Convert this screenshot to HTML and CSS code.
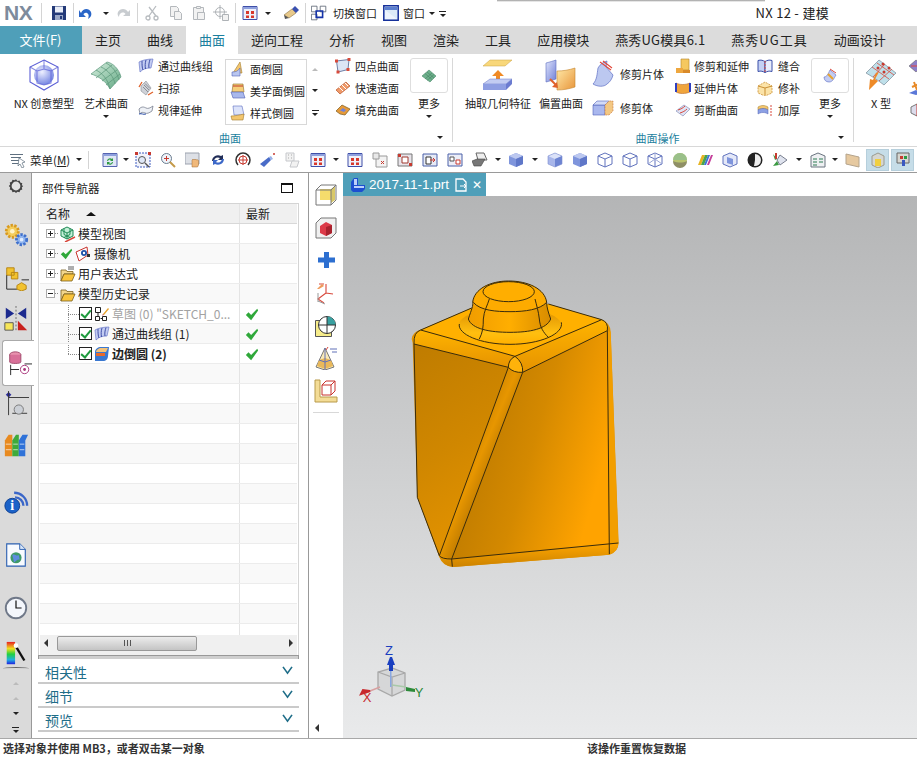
FILE: index.html
```html
<!DOCTYPE html>
<html lang="zh">
<head>
<meta charset="utf-8">
<title>NX 12 - 建模</title>
<link rel="stylesheet" href="styles.css">
</head>
<body>
<svg class="defs" width="0" height="0">
<defs>
<linearGradient id="gBlue" x1="0" y1="0" x2="1" y2="1"><stop offset="0" stop-color="#dfe4fb"/><stop offset="1" stop-color="#6f7fd8"/></linearGradient>
<linearGradient id="gOrange" x1="0" y1="0" x2="1" y2="1"><stop offset="0" stop-color="#ffe9a8"/><stop offset="1" stop-color="#e8953a"/></linearGradient>
<linearGradient id="gGreen" x1="0" y1="0" x2="1" y2="1"><stop offset="0" stop-color="#d8efe0"/><stop offset="1" stop-color="#62a883"/></linearGradient>
<radialGradient id="gSphere" cx=".4" cy=".35" r=".7"><stop offset="0" stop-color="#eef0ff"/><stop offset="1" stop-color="#6c7ee0"/></radialGradient>
<symbol id="save" viewBox="0 0 16 16"><path d="M1 1h14v14H1z" fill="#243a78"/><path d="M4 1.500h8v6H4z" fill="#e8ecf6"/><path d="M4 10h8v5H4z" fill="#9aa7c6"/><path d="M9 11h2v3H9z" fill="#243a78"/></symbol>
<symbol id="undo" viewBox="0 0 16 16"><path d="M3 8C5 3 11 3 13 7c1 3 0 5-3 7 1-3 1-5-1-6-2-.6-3 .4-3.500 1.500L8 12H1V5z" fill="#2a66c8"/></symbol>
<symbol id="redo" viewBox="0 0 16 16"><path d="M13 7C11 3 5 3 3 7c-1 2 0 4 1 5 0-2 1-4 3-4.500 2-.3 3 .3 3.500 1.500L8 11h7V5z" fill="#c8ccd0"/></symbol>
<symbol id="cut" viewBox="0 0 16 16"><g fill="none" stroke="#b8bcc0" stroke-width="1.300"><path d="M12 1 5 11M5 2l7 9"/><circle cx="4" cy="13" r="2"/><circle cx="12" cy="13" r="2"/></g></symbol>
<symbol id="copy" viewBox="0 0 16 16"><g fill="#f2f2f2" stroke="#b4b8bc"><path d="M2.500 1.500h6l2 2v8h-8z"/><path d="M6.500 6.500h5l2 2v6h-7z"/></g></symbol>
<symbol id="paste" viewBox="0 0 16 16"><g fill="#f2f2f2" stroke="#b4b8bc"><path d="M2.500 2.500h10v12h-10z"/><path d="M5.500 1.500h4v2h-4z"/><path d="M6.500 7.500h7v7h-7z"/></g></symbol>
<symbol id="move" viewBox="0 0 16 16"><g fill="none" stroke="#aeb2b6"><circle cx="7" cy="7" r="4.500"/><path d="M7 0v14M0 7h14"/><path d="M9.500 9.500h6v6h-6z" fill="#f2f2f2"/></g></symbol>
<symbol id="disp" viewBox="0 0 16 16"><path d="M1 1.500h14v13H1z" fill="#eef0fa" stroke="#3f4fa8"/><path d="M1.500 2h13v2h-13z" fill="#8ea0de"/><g fill="#d8382c"><path d="M4 6h3v3H4zM9 6h3v3H9zM4 10.500h3v2.500H4zM9 10.500h3v2.500H9z"/></g></symbol>
<symbol id="eraser" viewBox="0 0 16 16"><path d="M1 10 9 4l4 4-7 5z" fill="#e8c98a" stroke="#8d7444" stroke-width=".6"/><path d="M9 4l3-3 4 4-3 3z" fill="#3a50b0"/><path d="M1 10l5 3-4 1z" fill="#555"/></symbol>
<symbol id="switch" viewBox="0 0 20 20"><g fill="#fff" stroke="#55606e"><path d="M.5 1.500h7v7h-7zM11.500 1.500h7v7h-7zM.5 11.500h7v7h-7z"/></g><path d="M6.500 7.500h8v8h-8z" fill="none" stroke="#1533a8" stroke-width="2"/></symbol>
<symbol id="win" viewBox="0 0 16 16"><path d="M.8.800h14.400v14.400H.8z" fill="#dcebf8" stroke="#15309a" stroke-width="1.500"/><path d="M2 2h12v3H2z" fill="#5b7fcf"/><path d="M2 5l12 9H2z" fill="#f4f8ff" opacity=".7"/></symbol>
<symbol id="nx" viewBox="0 0 32 32"><circle cx="16" cy="16" r="10" fill="url(#gSphere)"/><g fill="none" stroke="#5b5fd6" stroke-width="1.100"><path d="M16 1 30 8v15l-14 8L2 23V8z"/><path d="M16 1v9M2 8l7 4M30 8l-7 4M9 12l7-2 7 2v12l-7 2-7-2z" opacity=".7"/></g></symbol>
<symbol id="art" viewBox="0 0 32 32"><path d="M1 15 17 3c6 1 12 7 14 15L20 30C16 22 8 17 1 15z" fill="url(#gGreen)" stroke="#5f9a7e" stroke-width=".7"/><g fill="none" stroke="#5f9a7e" stroke-width=".8"><path d="M6 19 22 6M12 22 27 11M16 26 30 15M6 11c6 3 12 9 14 19M11 8c7 3 13 10 14 17M16 4c6 3 11 9 13 17"/></g></symbol>
<symbol id="thru" viewBox="0 0 16 16"><path d="M1 4c3-2 9-3 14-3l-2 9c-5 0-8 1-11 4z" fill="#c3ccf2" stroke="#5d6bc2" stroke-width=".6"/><path d="M4 3c0 3 0 7 1 9M8 2c-1 3-1 6-.5 9M12 1.500c-1 3-1.500 6-1 8.500" stroke="#3f4fa8" fill="none"/></symbol>
<symbol id="sweep" viewBox="0 0 16 16"><path d="M3 6 8 1l5 7-5 7-5-4z" fill="#cfd2d8" stroke="#8c8f96" stroke-width=".6"/><path d="M5 7l5 5M6 5l5 5M7 3.500l5 5" stroke="#8c8f96"/><path d="M1 7 4 2M10 15l5-3" stroke="#e0612a" stroke-width="1.300"/></symbol>
<symbol id="law" viewBox="0 0 16 16"><path d="M1 7c3-3 5-2 7-1s4 0 7-2l-1 5c-3 2-5 3-7 2s-4-1-5 1z" fill="#eef1f6" stroke="#7a8090" stroke-width=".8"/><path d="M1 12c3-1 4 1 7 0" stroke="#2b4fa8" fill="none"/></symbol>
<symbol id="fblend" viewBox="0 0 16 16"><path d="M10 1l2 11H3z" fill="#f3c66f" stroke="#a37a2a" stroke-width=".6"/><path d="M2 11c4 0 6-1 8-4v8H2z" fill="#b9c6f0" stroke="#5466b8" stroke-width=".6"/></symbol>
<symbol id="ablend" viewBox="0 0 16 16"><path d="M3 1h10l1 8H2z" fill="#f6cf7a" stroke="#8d6b2a" stroke-width=".6"/><path d="M3 3h10" stroke="#c0392b"/><path d="M1 9h12l2 6H3z" fill="#a9b8ec" stroke="#5060b4" stroke-width=".6"/></symbol>
<symbol id="sblend" viewBox="0 0 16 16"><path d="M3 1h9l2 9H4z" fill="#dce3fa" stroke="#5a6cc0" stroke-width=".6"/><path d="M1 11c4 0 8-1 13-2l-1 6H2z" fill="#f3c66f" stroke="#a37a2a" stroke-width=".6"/></symbol>
<symbol id="fourpt" viewBox="0 0 16 16"><path d="M1.500 3 14 1.500l-1 10L3 14z" fill="#dce6f6" stroke="#6f7fa6"/><g fill="#d84a3a"><rect x="0" y="1.500" width="3" height="3"/><rect x="12.500" y="0" width="3" height="3"/><rect x="11.500" y="10" width="3" height="3"/><rect x="1.500" y="12.500" width="3" height="3"/></g></symbol>
<symbol id="quick" viewBox="0 0 16 16"><path d="M1 10 11 2l4 4L5 14z" fill="#ef9a6a" stroke="#b8552a" stroke-width=".7"/><path d="M4 7l4 4M7 5l4 4M10 3l3 3" stroke="#fff"/></symbol>
<symbol id="fill" viewBox="0 0 16 16"><path d="M1 9 7 3l8 4-5 6-5-1z" fill="#e69a3a" stroke="#7a5a1f" stroke-width=".7"/><path d="M5 8.500 8 6l3 2-2 2z" fill="#7283d6"/></symbol>
<symbol id="more1" viewBox="0 0 16 16"><path d="M1 8 8 2l7 6-6 6z" fill="#6eb08c" stroke="#4a8a69" stroke-width=".6"/><path d="M4 5.500l7 6M6 4l7 6M4 11l7-6M6 12.500l7-6" stroke="#3f7a5c" stroke-width=".5"/></symbol>
<symbol id="extract" viewBox="0 0 32 32"><path d="M1 7 8 1h22l-7 6z" fill="#f8d77a" stroke="#caa142" stroke-width=".5"/><path d="M14 11h4v5h4l-6 6-6-6h4z" transform="rotate(180 16 16.500)" fill="#f08a24"/><path d="M1 25l7-5h22l-6 5z" fill="#c2ccf2" stroke="#6a79c8" stroke-width=".5"/><path d="M1 25h23v6H1z" fill="#8e9ee2"/><path d="M24 25l6-5v5l-6 6z" fill="#6b7bd0"/></symbol>
<symbol id="offset" viewBox="0 0 32 32"><path d="M1 4c4-1 7-2 10-3v19c-3 1-6 2-10 3z" fill="url(#gBlue)" stroke="#5a6cc0" stroke-width=".6"/><path d="M12 12c6 0 12-1 18-3v19c-6 2-12 3-18 3z" fill="url(#gOrange)" stroke="#c5872f" stroke-width=".6"/><path d="M5 20l6 6" stroke="#e0612a" stroke-width="2"/><path d="M13 29l-6-1 5-5z" fill="#e0612a"/></symbol>
<symbol id="tsheet" viewBox="0 0 22 28"><path d="M1 24c4-4 4-10 5-16 2-4 6-6 9-7l-1 6 7 8c-1 4-3 7-6 9-3 3-9 3-14 0z" fill="#bcc8f0" stroke="#5d6fc4" stroke-width=".7"/><path d="M8 2l11 8M11 1l9 7" stroke="#e0463a" stroke-width="1.100" fill="none"/></symbol>
<symbol id="tbody" viewBox="0 0 22 16"><path d="M1 5h12v10H1z" fill="#a9b7ee" stroke="#5161bb" stroke-width=".6"/><path d="M1 5l4-4h12l-4 4z" fill="#d2daf8" stroke="#5161bb" stroke-width=".6"/><path d="M13 5l4-4h4v10l-4 4h-4z" fill="#f3c884" stroke="#c5713a" stroke-width=".6" stroke-dasharray="2 1"/></symbol>
<symbol id="ttrim" viewBox="0 0 16 16"><path d="M6 1h8v11H6z" fill="#f5c85f" stroke="#b1852a" stroke-width=".6"/><path d="M1 10h7v5H1z" fill="#eea73f"/><path d="M8 12h7v3H8z" fill="#d98a2a"/></symbol>
<symbol id="tsheet2" viewBox="0 0 16 16"><path d="M1 3c4 2 9 2 14 0v9c-5 2-10 2-14 0z" fill="#f0a53c" stroke="#b9692a" stroke-width=".6"/><path d="M1 3v9M15 3v9" stroke="#3040c0" stroke-width="2"/></symbol>
<symbol id="tcut" viewBox="0 0 16 16"><path d="M1 9 9 3l6 4-7 7z" fill="#dfe3f4" stroke="#7a83b0" stroke-width=".6"/><path d="M3 8c3-1 5-2 7-4M5 11c3-1 5-2 7-4" stroke="#d8483c" fill="none"/></symbol>
<symbol id="sew" viewBox="0 0 16 16"><path d="M1 2.500c3-1 5 0 7 1v11c-2-1-4-2-7-1z" fill="#c4d0f4" stroke="#3a4fa8"/><path d="M15 2.500c-3-1-5 0-7 1v11c2-1 4-2 7-1z" fill="#e8edfc" stroke="#3a4fa8"/><path d="M8 3v12" stroke="#d8483c" stroke-dasharray="2 1"/></symbol>
<symbol id="patch" viewBox="0 0 16 16"><path d="M1 6l7-4 7 4v7l-7 3-7-3z" fill="#fbe3a8" stroke="#c98f35" stroke-width=".8" stroke-dasharray="2 1"/><path d="M8 8v7M1 6l7 2 7-2" stroke="#c98f35" fill="none"/></symbol>
<symbol id="thick" viewBox="0 0 16 16"><path d="M1 5c3-2 7-2 10 0v3C8 6 4 6 1 8z" fill="#f3c66f" stroke="#a37a2a" stroke-width=".5"/><path d="M1 8c3-2 7-2 10 0v4C8 10 4 10 1 12z" fill="#8ca0e4" stroke="#4f61b4" stroke-width=".5"/><path d="M14 3v11" stroke="#d8483c" stroke-dasharray="2 1"/></symbol>
<symbol id="more2" viewBox="0 0 16 16"><path d="M2 9c3 0 4-3 6-7l6 5c-2 3-3 7-7 7-3 0-5-2-5-5z" fill="#c3ccf2" stroke="#5d6fc4" stroke-width=".6"/><path d="M6 6l5 5" stroke="#e8a42c" stroke-width="2"/><path d="M8 1l6 4" stroke="#d8483c"/></symbol>
<symbol id="xtype" viewBox="0 0 32 32"><path d="M1 14 14 1l17 13-12 12C14 22 8 18 1 14z" fill="#bfe0ea" stroke="#6a7a8a" stroke-width=".6"/><path d="M7 8 24 20M12 4l17 12M8 18 20 5M14 22 27 10" stroke="#d8483c" fill="none" stroke-width=".8"/><g fill="#c73a30"><circle cx="13" cy="9" r="1.500"/><circle cx="19" cy="13" r="1.500"/><circle cx="24" cy="9" r="1.500"/><circle cx="18" cy="5" r="1.500"/></g><path d="M14 14l-4 7 3 2-9 9 1-11 3 1 3-7z" transform="translate(0 -1)" fill="#ee8a28"/></symbol>
<symbol id="x1" viewBox="0 0 16 16"><path d="M1 8l7-6 7 5-7 7z" fill="#8c7fc8" stroke="#555" stroke-width=".5"/><path d="M3 8h9" stroke="#e0463a"/></symbol>
<symbol id="x2" viewBox="0 0 16 16"><path d="M1 13l7-3 7 3-7 2z" fill="#5b78d8"/><path d="M6 2l3 8M4 7l7-3" stroke="#e88a28" stroke-width="2"/></symbol>
<symbol id="x3" viewBox="0 0 16 16"><path d="M3 5l6-3 6 4-6 8-6-3z" fill="#dcdcec" stroke="#777"/><path d="M9 2v12" stroke="#c73a30"/></symbol>
<symbol id="menu" viewBox="0 0 16 16"><path d="M0 2h13v1H0zM1 5h10v1H1zM1 8h9v1H1zM2 11h7v1H2z" fill="#5f7080"/><path d="M9 6l6 4-3 1 2 4-2 1-2-4-2 2z" fill="#fff" stroke="#5f7080" stroke-width=".7"/></symbol>
<symbol id="refresh" viewBox="0 0 16 16"><path d="M1 1.500h14v13H1z" fill="#dfe6f6" stroke="#5563b0"/><path d="M1.500 2h13v2h-13z" fill="#8ea0de"/><path d="M5 9a3 3 0 0 1 5-2l1-1v3H8l1-1a2 2 0 0 0-3 1zM11 10a3 3 0 0 1-5 2l-1 1v-3h3l-1 1a2 2 0 0 0 3-1z" fill="#2f9a42"/></symbol>
<symbol id="fit" viewBox="0 0 16 16"><path d="M1 1h14v14H1z" fill="#f1f3fb" stroke="#3f5cc0" stroke-dasharray="2 1"/><circle cx="7" cy="8" r="3.500" fill="#dfe8f8" stroke="#555"/><path d="M10 11l4 4" stroke="#555" stroke-width="1.500"/><path d="M0 0h3v3H0zM13 0h3v3h-3z" fill="#c73a30"/></symbol>
<symbol id="zoom" viewBox="0 0 16 16"><circle cx="6.500" cy="6.500" r="5" fill="#eef3fa" stroke="#6a7c8e"/><path d="M6.500 4v5M4 6.500h5" stroke="#c73a30"/><path d="M10 10l5 5" stroke="#c49a4a" stroke-width="2"/></symbol>
<symbol id="pan" viewBox="0 0 16 16"><path d="M0 1h14v11H0z" fill="#dde0e6" stroke="#9ca2ae"/><path d="M7 15V8l1-1 1 1 1-1 1 1 1-.5 1.500 1V13l-1 2z" fill="#f0b87a" stroke="#a06a30" stroke-width=".5"/></symbol>
<symbol id="rotate" viewBox="0 0 16 16"><path d="M2 9a6 6 0 0 1 9-5l2-1v5H8l2-2a4 4 0 0 0-6 3z" fill="#222e58"/><path d="M14 7a6 6 0 0 1-9 5l-2 1V8h5l-2 2a4 4 0 0 0 6-3z" fill="#3c68c8"/></symbol>
<symbol id="orbit" viewBox="0 0 16 16"><path d="M3 13a7 7 0 1 1 10 0" fill="none" stroke="#333" stroke-width="1.500"/><circle cx="8" cy="8" r="4" fill="#fff" stroke="#c73a30"/><path d="M8 3v10M3 8h10" stroke="#c73a30"/></symbol>
<symbol id="spot" viewBox="0 0 16 16"><path d="M0 12l9-7 2 3-7 7z" fill="#4a6cc8"/><path d="M9 5l2 3 2-1-2-3z" fill="#9ab2e8"/><circle cx="14" cy="2" r="1" fill="#c73a30"/></symbol>
<symbol id="ghost" viewBox="0 0 16 16"><path d="M1 1h8v8H1z" fill="#f2f2f2" stroke="#c6c8cc"/><path d="M7 9h7l-2 6H5z" fill="#f2f2f2" stroke="#c6c8cc"/><path d="M3 3h1M6 3h1M3 6h1M6 6h1" stroke="#aaa"/></symbol>
<symbol id="grid" viewBox="0 0 16 16"><path d="M4 4h11v11H4z" fill="#f3f3f3" stroke="#9a9a9a"/><path d="M1 1h6v6H1z" fill="#e8e8e8" stroke="#9a9a9a"/><path d="M9 9l3 3M12 9l-3 3" stroke="#c73a30"/></symbol>
<symbol id="v1" viewBox="0 0 16 16"><path d="M1 2h14v12H1z" fill="#e8e4ea" stroke="#777"/><path d="M5 5h6v6H5z" fill="#fff" stroke="#a03a30"/><path d="M1 2h3v3H1zM12 11h3v3h-3z" fill="#c73a30"/></symbol>
<symbol id="v2" viewBox="0 0 16 16"><path d="M1 2h14v12H1z" fill="#e6eaf6" stroke="#4a60a8"/><path d="M4 5h5v7H4z" fill="#fff" stroke="#333"/><path d="M8 8h5M11 6l2 2-2 2" stroke="#c73a30" fill="none"/></symbol>
<symbol id="v3" viewBox="0 0 16 16"><path d="M1 2h14v12H1z" fill="#eceef8" stroke="#4a60a8"/><path d="M3 5h4v4H3z" fill="#fff" stroke="#555"/><path d="M9 8h4v4H9z" fill="#fff" stroke="#c73a30"/></symbol>
<symbol id="printer" viewBox="0 0 16 16"><path d="M4 1h8l3 7H6z" fill="#eee" stroke="#666"/><path d="M0 9l5-2h8l-4 7H2z" fill="#777" stroke="#444" stroke-width=".6"/></symbol>
<symbol id="cube" viewBox="0 0 16 16"><path d="M8 1l7 3v8l-7 3-7-3V4z" fill="#7f95dc"/><path d="M8 1l7 3-7 3-7-3z" fill="#bcc8f0"/><path d="M8 7l7-3v8l-7 3z" fill="#5f77c8"/></symbol>
<symbol id="cubeS" viewBox="0 0 16 16"><path d="M8 1l7 3v8l-7 3-7-3V4z" fill="#a8b6ea"/><path d="M8 1l7 3-7 3-7-3z" fill="#dbe2f8"/><path d="M8 7l7-3v8l-7 3z" fill="#6d84d2"/><path d="M8 1l7 3v8l-7 3-7-3V4z" fill="none" stroke="#7d8ed0" stroke-width=".6"/></symbol>
<symbol id="cubeW" viewBox="0 0 16 16"><g fill="none" stroke="#6173bd"><path d="M8 1l7 3v8l-7 3-7-3V4z"/><path d="M1 4l7 3 7-3M8 7v8"/></g></symbol>
<symbol id="cubeH" viewBox="0 0 16 16"><g fill="none" stroke="#6173bd"><path d="M8 1l7 3v8l-7 3-7-3V4z"/><path d="M1 4l7 3 7-3M8 7v8"/><path d="M8 1v6M1 12l7-5 7 5" stroke="#9aa6d6"/></g></symbol>
<symbol id="ball" viewBox="0 0 16 16"><circle cx="8" cy="8" r="7" fill="#b9c46e"/><path d="M1 8a7 7 0 0 1 14 0z" fill="#9ac08a"/><path d="M1 9a7 7 0 0 0 14 0c-4 2-9 2-14 0z" fill="#8f8f66"/></symbol>
<symbol id="rainbow" viewBox="0 0 16 16"><path d="M1 13 5 3h3L4 13z" fill="#e6b422"/><path d="M4 13 8 3h3L7 13z" fill="#4aa54a"/><path d="M7 13l4-10h2L9 13z" fill="#3c72d8"/><path d="M10 13l4-10h2l-4 10z" fill="#c53f9a"/></symbol>
<symbol id="cubeA" viewBox="0 0 16 16"><path d="M8 1l7 3v8l-7 3-7-3V4z" fill="#e4e8f8" stroke="#6173bd"/><path d="M5 5l6 2v6l-6-2z" fill="#7f95dc"/></symbol>
<symbol id="disc" viewBox="0 0 16 16"><circle cx="8" cy="8" r="7.500" fill="#222"/><path d="M8 8V2a6 6 0 0 1 6 6 6 6 0 0 1-7 6z" fill="#eee"/></symbol>
<symbol id="sel" viewBox="0 0 16 16"><path d="M8 3l7 5-7 5-3-5z" fill="#dfe3ee" stroke="#7a8090"/><path d="M1 2l4 5-2 1zM1 14l4-5 2 4z" fill="#3a9a42"/><path d="M4 1v6" stroke="#c73a30" stroke-width="2"/></symbol>
<symbol id="layers" viewBox="0 0 16 16"><path d="M8 1l7 3v11H1V4z" fill="#eef0f2" stroke="#6a7480"/><path d="M3 7h4M3 10h4M3 13h4M9 7h4M9 10h4" stroke="#2c7a52"/></symbol>
<symbol id="paper" viewBox="0 0 16 16"><path d="M1 2l13 3v10L1 12z" fill="#e6c9a0" stroke="#b5a48c"/></symbol>
<symbol id="tog1" viewBox="0 0 16 16"><path d="M2 4l6-3 6 3v9l-6 3-6-3z" fill="#d6d6d0" stroke="#9a9a90"/><path d="M5 7h6v7H5z" fill="#f0cf40"/></symbol>
<symbol id="tog2" viewBox="0 0 16 16"><path d="M2 1h12v10H2z" fill="#d6d6d0" stroke="#666"/><path d="M5 4h3v3H5z" fill="#c73a30"/><path d="M9 4h3v3H9z" fill="#2a9a42"/><path d="M7 8h3v6H7z" fill="#3a58c0"/></symbol>
<symbol id="gear" viewBox="0 0 16 16"><path d="M8 1.200 9.500 3l2-.5.800 2 2 .8-.5 2L15.200 8l-1.400 1.500.5 2-2 .8-.8 2-2-.5L8 15l-1.500-1.200-2 .5-.8-2-2-.8.5-2L.8 8l1.400-1.500-.5-2 2-.8.800-2 2 .5z" fill="#444"/><circle cx="8" cy="8" r="4.400" fill="#e2e2e2"/></symbol>
<symbol id="gears" viewBox="0 0 28 28"><circle cx="10" cy="10" r="6.500" fill="#f4cd5c" stroke="#d89a20" stroke-width="3" stroke-dasharray="2.500 1.500"/><circle cx="20" cy="19" r="5.500" fill="#8fb4ee" stroke="#3f70cc" stroke-width="3" stroke-dasharray="2.500 1.500"/><circle cx="10" cy="10" r="2.500" fill="#fff3c8"/><circle cx="20" cy="19" r="2" fill="#e0ecff"/></symbol>
<symbol id="asm" viewBox="0 0 28 28"><path d="M4 3h8v8H4zM9 8h7v7H9z" fill="#f2c22e" stroke="#b58412"/><path d="M4 11v15h11M20 16h8" fill="none" stroke="#222"/><path d="M15 22l5-3 5 3v4l-5 2-5-2z" fill="#f2c22e" stroke="#b58412"/></symbol>
<symbol id="mirror" viewBox="0 0 28 28"><path d="M3 2l9 6-9 6zM25 2l-9 6 9 6z" fill="#1c2a8e"/><path d="M14 0v28" stroke="#666" stroke-dasharray="2 2"/><path d="M2 18h9v8H2z" fill="#f7e658" stroke="#555"/><path d="M16 26V16l10 10z" fill="#c8201c"/></symbol>
<symbol id="nav" viewBox="0 0 28 28"><ellipse cx="10" cy="5" rx="6" ry="3" fill="#e892ae" stroke="#a04a6a"/><path d="M4 5v8c0 2 12 2 12 0V5" fill="#d87098" stroke="#a04a6a"/><path d="M5 16v11M5 21h9M20 15h8" fill="none" stroke="#222"/><circle cx="20" cy="21" r="4.500" fill="none" stroke="#a8347a"/><circle cx="20" cy="21" r="1.500" fill="#a8347a"/></symbol>
<symbol id="constr" viewBox="0 0 28 28"><path d="M6 1l3 3-3 3-3-3z" fill="#2a2a9a"/><path d="M6 0v26M6 7h22M10 24h16" stroke="#333" fill="none"/><circle cx="17" cy="20" r="5" fill="#ccd0d6" stroke="#777"/></symbol>
<symbol id="books" viewBox="0 0 28 28"><path d="M2 8l4-6h4v23H2z" fill="#e88a20"/><path d="M10 8l4-6h3v23h-7z" fill="#3eaa3a"/><path d="M17 8l4-6h6l-3 6v17h-7z" fill="#2f72d8"/><path d="M3 12h6M3 18h6M11 12h5M11 18h5M18 12h5M18 18h5" stroke="#fff" opacity=".7"/></symbol>
<symbol id="info" viewBox="0 0 28 28"><circle cx="10" cy="18" r="8" fill="#1b62c8" stroke="#0f3f90"/><text x="10" y="23" class="svg-i">i</text><path d="M12 4a14 14 0 0 1 14 14M13 9a9 9 0 0 1 9 9" fill="none" stroke="#3a66c8" stroke-width="2.500"/></symbol>
<symbol id="web" viewBox="0 0 28 28"><path d="M4 2h14l6 6v18H4z" fill="#f8fbff" stroke="#2a5fb0" stroke-width="1.200"/><path d="M18 2v6h6" fill="#d8e6f8" stroke="#2a5fb0"/><circle cx="14" cy="17" r="6" fill="#3e9a6a"/><path d="M10 14c3-2 4 2 7 0l1 5c-2-1-5 2-6 3z" fill="#5d8de0"/></symbol>
<symbol id="clock" viewBox="0 0 28 28"><circle cx="14" cy="14" r="11" fill="#f4f7fc" stroke="#6f7888" stroke-width="2"/><path d="M14 6v8h6" fill="none" stroke="#111" stroke-width="1.300"/></symbol>
<symbol id="color" viewBox="0 0 28 28"><defs><linearGradient id="gSpec" x1="0" y1="0" x2="0" y2="1"><stop offset="0" stop-color="#e82020"/><stop offset=".3" stop-color="#f0e020"/><stop offset=".55" stop-color="#20d040"/><stop offset=".8" stop-color="#20b0e0"/><stop offset="1" stop-color="#2020e0"/></linearGradient></defs><path d="M4 1h9v24H4z" fill="url(#gSpec)"/><path d="M14 6l9 15" stroke="#111" stroke-width="2.500"/><circle cx="14" cy="5" r="2.500" fill="#fff"/></symbol>
<symbol id="r1" viewBox="0 0 24 24"><path d="M2 7l5-5h15v15l-5 5H2z" fill="#fff" stroke="#777"/><path d="M6 6h11v11H6z" fill="#f5dc6c"/><path d="M17 6l4-3v14l-4 3z" fill="#d8c868"/><path d="M2 7h15v15M17 7l5-5" fill="none" stroke="#777"/></symbol>
<symbol id="r2" viewBox="0 0 24 24"><path d="M2 7l5-5h15v15l-5 5H2z" fill="#f0f0f0" stroke="#777"/><path d="M6 10l6-4 6 3v8l-6 3-6-3z" fill="#dc3a48"/><path d="M12 11v9l6-3V9z" fill="#a8222e"/></symbol>
<symbol id="r3" viewBox="0 0 24 24"><path d="M10 4h5v5.500h6v5h-6V20h-5v-5.500H4v-5h6z" fill="#2d6fd0"/></symbol>
<symbol id="r4" viewBox="0 0 24 24"><path d="M12 12V3M12 12l7 1M5 3h5M12 12l-8 6 6 4" fill="none" stroke="#d8483c" stroke-width="1.100"/><path d="M3 8l5-5 2 2-5 3z" fill="#ef9a5a"/><path d="M4 12v9" stroke="#999"/><path d="M4 20l7 3" stroke="#999"/></symbol>
<symbol id="r5" viewBox="0 0 24 24"><path d="M1.500 6.500h16v16h-16z" fill="#f6ec8a" stroke="#555"/><circle cx="13" cy="11" r="8.500" fill="#fff" stroke="#333"/><path d="M13 2.500a8.500 8.500 0 0 1 8.500 8.500H13z" fill="#38a0a0"/><path d="M13 2.500v17M4.500 11h17" stroke="#333"/></symbol>
<symbol id="r6" viewBox="0 0 24 24"><path d="M11 2l9 19-9 3-9-3z" fill="#f8e9b8" stroke="#777"/><path d="M5 14l6-2 6 2 2 6-8 3-8-3z" fill="#e9b85a"/><path d="M11 2v22M5 14l6 2 6-2" fill="none" stroke="#6170b8"/><path d="M16 3h7M18 6h5" stroke="#6170b8"/><path d="M14 1l-2 3" stroke="#d8483c"/></symbol>
<symbol id="r7" viewBox="0 0 24 24"><path d="M1 23V1h5v17h17v5z" fill="#f3dc96" stroke="#b89a4a"/><path d="M8 6l4-4h9v10l-4 4H8z" fill="#fff" stroke="#c8322c"/><path d="M8 6h9v10M17 6l4-4" fill="none" stroke="#c8322c"/></symbol>
<symbol id="pcheck" viewBox="0 0 16 16"><path d="M1 9l3-3 3 3 7-7 1 2-8 11z" fill="#2fa83a"/></symbol>
<symbol id="mview" viewBox="0 0 16 16"><g fill="#c4f0d8" stroke="#1f8a55"><path d="M7 1l6 3v6l-6 3-6-3V4z"/><path d="M1 4l6 3 6-3M7 7v6M4 2.500v6l6 3M10 2.500v6l-6 3" fill="none"/></g><path d="M5 16l10-5" stroke="#d8483c" stroke-width="1.500"/></symbol>
<symbol id="cam" viewBox="0 0 16 16"><path d="M1 6l11-5 1 8-9 6z" fill="#fff" stroke="#c8322c"/><circle cx="9" cy="7" r="3" fill="#1d4fa8"/><circle cx="9" cy="7" r="1.200" fill="#fff"/><path d="M12 8h3v3h-3z" fill="#333"/></symbol>
<symbol id="folder" viewBox="0 0 16 16"><path d="M1 4h5l1 1.500h6V8H4L1 15z" fill="#f2d68c" stroke="#7a6020" stroke-width=".8"/><path d="M1 15l3-7h11l-3 7z" fill="#f9c43c" stroke="#7a6020" stroke-width=".8"/></symbol>
<symbol id="ufolder" viewBox="0 0 16 16"><use href="#folder" width="16" height="16"/><path d="M8 1h6M8 3h6" stroke="#333" stroke-width=".8"/></symbol>
<symbol id="sketch" viewBox="0 0 16 16"><g fill="#fff" stroke="#222"><path d="M1.500 1.500h5v5h-5zM1.500 10.500h4v4h-4zM8.500 10.500h4v4h-4z"/><path d="M4 6.500v4M6.500 12.500h2" fill="none"/></g><path d="M9 8l5-6 1 1-5 6z" fill="#e8a42c"/><path d="M9 8l1 1-2 .5z" fill="#c8322c"/></symbol>
<symbol id="eblend" viewBox="0 0 16 16"><path d="M1 6c0-3 3-5 6-5h8l-1 9c0 3-2 5-5 5H1z" fill="#3a78d0"/><path d="M2 6c0-2 3-4 5-4h7l-2 4z" fill="#f3c27a"/><path d="M2 7h9v3H2z" fill="#e86a2a"/></symbol>
<symbol id="tab3d" viewBox="0 0 16 16"><path d="M1 13V5l3-4h4v7h7v4l-3 3H3z" fill="#1d4fd0"/><path d="M4 2h3v6H4z" fill="#bcd0fa"/><path d="M4 9h10v2H4z" fill="#bcd0fa"/></symbol>
<symbol id="doc" viewBox="0 0 12 14"><path d="M1 1h7l3 3v9H1z" fill="none" stroke="#fff" stroke-width="1.300"/><path d="M5 8h6M9 6l2 2-2 2" stroke="#fff" fill="none"/></symbol>
</defs>
</svg>

<i class="topshadow"></i>
<header class="titlebar">
  <span class="logo">NX</span><i class="vsep"></i>
  <svg class="ti save-i"><use href="#save"/></svg>
  <i class="vsep"></i>
  <svg class="ti undo-i"><use href="#undo"/></svg><b class="arr arr-u"></b>
  <svg class="ti"><use href="#redo"/></svg>
  <i class="vsep"></i>
  <svg class="ti"><use href="#cut"/></svg>
  <svg class="ti copy-i"><use href="#copy"/></svg>
  <svg class="ti paste-i"><use href="#paste"/></svg>
  <svg class="ti"><use href="#move"/></svg>
  <i class="vsep"></i>
  <svg class="ti"><use href="#disp"/></svg><b class="arr arr-d"></b>
  <svg class="ti"><use href="#eraser"/></svg>
  <i class="vsep"></i>
  <svg class="ti switch-i"><use href="#switch"/></svg><span class="tt">切换窗口</span>
  <svg class="ti"><use href="#win"/></svg><span class="tt tt2">窗口</span><b class="arr arr-w"></b><b class="over over-w"></b>
  <span class="apptitle">NX 12 - 建模</span>
</header>

<nav class="tabs">
  <span class="tab file">文件(F)</span>
  <span class="tab">主页</span><span class="tab">曲线</span><span class="tab active">曲面</span><span class="tab">逆向工程</span><span class="tab">分析</span><span class="tab">视图</span><span class="tab">渲染</span><span class="tab">工具</span><span class="tab">应用模块</span><span class="tab ug1">燕秀UG模具6.1</span><span class="tab ug2">燕秀UG工具</span><span class="tab">动画设计</span>
</nav>

<section class="ribbon">
  <div class="group g1">
    <div class="gbody">
      <div class="big w72"><svg class="bi"><use href="#nx"/></svg><span>NX 创意塑型</span></div>
      <div class="big w52"><svg class="bi"><use href="#art"/></svg><span>艺术曲面</span><b class="arr"></b></div>
      <ul class="list l1">
        <li><svg class="si"><use href="#thru"/></svg>通过曲线组</li>
        <li><svg class="si"><use href="#sweep"/></svg>扫掠</li>
        <li><svg class="si"><use href="#law"/></svg>规律延伸</li>
      </ul>
      <ul class="gallery">
        <li><svg class="si"><use href="#fblend"/></svg>面倒圆</li>
        <li><svg class="si"><use href="#ablend"/></svg>美学面倒圆</li>
        <li><svg class="si"><use href="#sblend"/></svg>样式倒圆</li>
      </ul>
      <div class="gscroll"><b class="arr up"></b><b class="arr"></b><b class="over"></b></div>
      <ul class="list l2">
        <li><svg class="si"><use href="#fourpt"/></svg>四点曲面</li>
        <li><svg class="si"><use href="#quick"/></svg>快速造面</li>
        <li><svg class="si"><use href="#fill"/></svg>填充曲面</li>
      </ul>
      <div class="more"><span class="morebox"><svg class="si"><use href="#more1"/></svg></span><span>更多</span><b class="arr"></b></div>
    </div>
    <div class="gfoot">曲面<b class="arr corner"></b></div>
  </div>
  <div class="group g2">
    <div class="gbody">
      <div class="big w72"><svg class="bi"><use href="#extract"/></svg><span>抽取几何特征</span></div>
      <div class="big w54"><svg class="bi"><use href="#offset"/></svg><span>偏置曲面</span></div>
      <div class="trim">
        <div class="trimrow"><svg class="ti22"><use href="#tsheet"/></svg>修剪片体</div>
        <div class="trimrow"><svg class="ti22 short"><use href="#tbody"/></svg>修剪体</div>
      </div>
      <ul class="list l3">
        <li><svg class="si"><use href="#ttrim"/></svg>修剪和延伸</li>
        <li><svg class="si"><use href="#tsheet2"/></svg>延伸片体</li>
        <li><svg class="si"><use href="#tcut"/></svg>剪断曲面</li>
      </ul>
      <ul class="list l4">
        <li><svg class="si"><use href="#sew"/></svg>缝合</li>
        <li><svg class="si"><use href="#patch"/></svg>修补</li>
        <li><svg class="si"><use href="#thick"/></svg>加厚</li>
      </ul>
      <div class="more"><span class="morebox"><svg class="si"><use href="#more2"/></svg></span><span>更多</span><b class="arr"></b></div>
    </div>
    <div class="gfoot">曲面操作<b class="arr corner"></b></div>
  </div>
  <div class="group g3">
    <div class="gbody">
      <div class="big w54"><svg class="bi"><use href="#xtype"/></svg><span>X 型</span></div>
      <ul class="list">
        <li><svg class="si"><use href="#x1"/></svg></li>
        <li><svg class="si"><use href="#x2"/></svg></li>
        <li><svg class="si"><use href="#x3"/></svg></li>
      </ul>
    </div>
  </div>
</section>

<div class="toolbar">
  <svg class="si menu-i"><use href="#menu"/></svg><span class="menu-t">菜单(<u>M</u>)</span><b class="arr"></b><i class="vsep tb-sep"></i>
  <span class="tb"><svg class="si"><use href="#refresh"/></svg></span><span class="ta a8"><b class="arr"></b></span>
  <span class="tb"><svg class="si"><use href="#fit"/></svg></span>
  <span class="tb"><svg class="si"><use href="#zoom"/></svg></span>
  <span class="tb"><svg class="si"><use href="#pan"/></svg></span>
  <span class="tb"><svg class="si"><use href="#rotate"/></svg></span>
  <span class="tb"><svg class="si"><use href="#orbit"/></svg></span>
  <span class="tb"><svg class="si"><use href="#spot"/></svg></span>
  <span class="tb"><svg class="si"><use href="#ghost"/></svg></span>
  <span class="tb"><svg class="si"><use href="#disp"/></svg></span><span class="ta a12"><b class="arr"></b></span>
  <span class="tb"><svg class="si"><use href="#disp"/></svg></span>
  <span class="tb"><svg class="si"><use href="#grid"/></svg></span>
  <span class="tb"><svg class="si"><use href="#v1"/></svg></span>
  <span class="tb"><svg class="si"><use href="#v2"/></svg></span>
  <span class="tb"><svg class="si"><use href="#v3"/></svg></span>
  <span class="tb"><svg class="si"><use href="#printer"/></svg></span><span class="ta a11"><b class="arr"></b></span>
  <span class="tb"><svg class="si"><use href="#cube"/></svg></span><span class="ta a14"><b class="arr"></b></span>
  <span class="tb"><svg class="si"><use href="#cubeS"/></svg></span>
  <span class="tb"><svg class="si"><use href="#cube"/></svg></span>
  <span class="tb"><svg class="si"><use href="#cubeW"/></svg></span>
  <span class="tb"><svg class="si"><use href="#cubeW"/></svg></span>
  <span class="tb"><svg class="si"><use href="#cubeH"/></svg></span>
  <span class="tb"><svg class="si"><use href="#ball"/></svg></span>
  <span class="tb"><svg class="si"><use href="#rainbow"/></svg></span>
  <span class="tb"><svg class="si"><use href="#cubeA"/></svg></span>
  <span class="tb"><svg class="si"><use href="#disc"/></svg></span>
  <span class="tb"><svg class="si"><use href="#sel"/></svg></span><span class="ta a13"><b class="arr"></b></span>
  <span class="tb"><svg class="si"><use href="#layers"/></svg></span><span class="ta a10"><b class="arr"></b></span>
  <span class="tb"><svg class="si"><use href="#paper"/></svg></span>
  <span class="tb on"><svg class="si"><use href="#tog1"/></svg></span>
  <span class="tb on"><svg class="si"><use href="#tog2"/></svg></span>
</div>

<main class="main">
  <aside class="rail">
    <svg class="ri gear-i"><use href="#gear"/></svg>
    <svg class="ri"><use href="#gears"/></svg>
    <svg class="ri"><use href="#asm"/></svg>
    <svg class="ri"><use href="#mirror"/></svg>
    <span class="railsel"><svg class="ri"><use href="#nav"/></svg></span>
    <svg class="ri"><use href="#constr"/></svg>
    <svg class="ri"><use href="#books"/></svg>
    <svg class="ri"><use href="#info"/></svg>
    <svg class="ri"><use href="#web"/></svg>
    <svg class="ri"><use href="#clock"/></svg>
    <svg class="ri"><use href="#color"/></svg>
    <div class="railend"><i class="wave"></i><b class="arr up"></b><b class="arr up"></b><b class="arr"></b><b class="over"></b></div>
  </aside>

  <section class="panel">
    <div class="ptitle"><span>部件导航器</span><i class="maxbox"></i></div>
    <div class="table">
      <div class="thead"><div class="c1">名称<b class="arr sort"></b></div><div class="c2">最新</div></div>
      <div class="tbody">
        <div class="row"><div class="c1"><i class="exp plus"></i><i class="dash"></i><svg class="si"><use href="#mview"/></svg><span class="nm">模型视图</span></div><div class="c2"></div></div>
        <div class="row"><div class="c1"><i class="exp plus"></i><i class="dash"></i><svg class="ck-s"><use href="#pcheck"/></svg><svg class="si"><use href="#cam"/></svg><span class="nm nm3">摄像机</span></div><div class="c2"></div></div>
        <div class="row"><div class="c1"><i class="exp plus"></i><i class="dash"></i><svg class="si"><use href="#ufolder"/></svg><span class="nm">用户表达式</span></div><div class="c2"></div></div>
        <div class="row"><div class="c1"><i class="exp minus"></i><i class="dash"></i><svg class="si"><use href="#folder"/></svg><span class="nm">模型历史记录</span></div><div class="c2"></div></div>
        <div class="row"><div class="c1 sub"><i class="tee"></i><i class="chk"></i><svg class="si"><use href="#sketch"/></svg><span class="nm dim">草图 (0) "SKETCH_0...</span></div><div class="c2"><svg class="ck-l"><use href="#pcheck"/></svg></div></div>
        <div class="row"><div class="c1 sub"><i class="tee"></i><i class="chk"></i><svg class="si"><use href="#thru"/></svg><span class="nm">通过曲线组 (1)</span></div><div class="c2"><svg class="ck-l"><use href="#pcheck"/></svg></div></div>
        <div class="row"><div class="c1 sub"><i class="tee last"></i><i class="chk"></i><svg class="si"><use href="#eblend"/></svg><span class="nm strong">边倒圆 (2)</span></div><div class="c2"><svg class="ck-l"><use href="#pcheck"/></svg></div></div>
        <div class="row"><div class="c1"></div><div class="c2"></div></div><div class="row"><div class="c1"></div><div class="c2"></div></div><div class="row"><div class="c1"></div><div class="c2"></div></div><div class="row"><div class="c1"></div><div class="c2"></div></div><div class="row"><div class="c1"></div><div class="c2"></div></div><div class="row"><div class="c1"></div><div class="c2"></div></div><div class="row"><div class="c1"></div><div class="c2"></div></div><div class="row"><div class="c1"></div><div class="c2"></div></div><div class="row"><div class="c1"></div><div class="c2"></div></div><div class="row"><div class="c1"></div><div class="c2"></div></div><div class="row"><div class="c1"></div><div class="c2"></div></div><div class="row"><div class="c1"></div><div class="c2"></div></div><div class="row"><div class="c1"></div><div class="c2"></div></div><div class="row"><div class="c1"></div><div class="c2"></div></div>
      </div>
      <div class="hscroll"><b class="tri-l"></b><span class="thumb"><i></i></span><b class="tri-r"></b></div>
    </div>
    <div class="sash"></div>
    <div class="acc"><span>相关性</span><svg class="chev" viewBox="0 0 12 10"><path d="M1 1l5 7 5-7" /></svg></div>
    <div class="acc"><span>细节</span><svg class="chev" viewBox="0 0 12 10"><path d="M1 1l5 7 5-7" /></svg></div>
    <div class="acc"><span>预览</span><svg class="chev" viewBox="0 0 12 10"><path d="M1 1l5 7 5-7" /></svg></div>
  </section>

  <aside class="strip">
    <svg class="sti"><use href="#r1"/></svg>
    <svg class="sti"><use href="#r2"/></svg>
    <svg class="sti"><use href="#r3"/></svg>
    <svg class="sti"><use href="#r4"/></svg>
    <svg class="sti"><use href="#r5"/></svg>
    <svg class="sti"><use href="#r6"/></svg>
    <svg class="sti"><use href="#r7"/></svg>
    <i class="stripsep"></i>
    <b class="tri-l strip-arrow"></b>
  </aside>

  <section class="view">
    <div class="viewtabs"><div class="vtab"><svg class="si"><use href="#tab3d"/></svg><span>2017-11-1.prt</span><svg class="doc"><use href="#doc"/></svg><span class="x">✕</span></div></div>
    <div class="canvas">
      <svg class="bottle" viewBox="0 0 690 930">
        <defs>
          <linearGradient id="bL" x1="0" y1="0" x2="0.3" y2="1"><stop offset="0" stop-color="#bf7c00"/><stop offset=".55" stop-color="#d08700"/><stop offset="1" stop-color="#e29200"/></linearGradient>
          <linearGradient id="bR" gradientUnits="userSpaceOnUse" x1="180" y1="500" x2="600" y2="620"><stop offset="0" stop-color="#bb7900"/><stop offset=".5" stop-color="#d48900"/><stop offset="1" stop-color="#ffa300"/></linearGradient>
          <linearGradient id="bD" gradientUnits="userSpaceOnUse" x1="200" y1="560" x2="270" y2="590"><stop offset="0" stop-color="#d38800"/><stop offset=".5" stop-color="#e79600"/><stop offset="1" stop-color="#c88100"/></linearGradient>
          <linearGradient id="bE" x1="0" y1="0" x2="0" y2="1"><stop offset="0" stop-color="#ffb400"/><stop offset="1" stop-color="#e69300"/></linearGradient>
          <linearGradient id="bB" x1="0" y1="0" x2="0" y2="1"><stop offset="0" stop-color="#ffa600"/><stop offset="1" stop-color="#cc8300"/></linearGradient>
          <linearGradient id="bN" x1="0" y1="0" x2="1" y2="0"><stop offset="0" stop-color="#f09c00"/><stop offset=".5" stop-color="#ffae00"/><stop offset="1" stop-color="#d88c00"/></linearGradient>
          <linearGradient id="bRing" x1="0" y1="0" x2="0" y2="1"><stop offset="0" stop-color="#d98b00"/><stop offset=".7" stop-color="#ffbf10"/><stop offset="1" stop-color="#ffb000"/></linearGradient>
        </defs>
        <path d="M35 210Q36 190 62 182L215 117 445 105 605 152Q630 160 632 188L656 822Q655 848 628 857L160 894Q128 892 118 865L52 685 38 222z" fill="#e39300"/>
        <path d="M42 225 325 295 118 860 52 685z" fill="url(#bL)"/>
        <path d="M325 295 368 310 155 870 118 860z" fill="url(#bD)"/>
        <path d="M368 310 622 185 628 825 155 870z" fill="url(#bR)"/>
        <path d="M622 185 632 188 655 822 628 825z" fill="#f29e00"/>
        <path d="M118 860 155 870 628 825 655 822Q655 848 628 857L160 894Q128 892 118 860z" fill="url(#bB)"/>
        <path d="M62 183 215 117 445 105 605 152 345 262z" fill="#ffb000"/>
        <path d="M62 183 345 262 325 295 42 225Q30 205 62 183z" fill="url(#bE)"/>
        <path d="M345 262 605 152Q632 165 622 185L368 310z" fill="url(#bE)"/>
        <path d="M345 262Q370 280 368 310 340 312 325 295 328 270 345 262z" fill="#ffb20a"/>
        <ellipse cx="330" cy="170" rx="155" ry="55" fill="url(#bRing)"/>
        <path d="M205 150C215 120 220 110 218 100 222 60 270 36 326 36 385 36 435 60 440 100 440 115 445 130 452 150 440 180 390 190 330 190 270 190 215 175 205 150z" fill="url(#bN)"/>
        <path d="M222 100C240 125 290 128 330 128 375 128 420 122 440 100 435 60 385 36 326 36 270 36 222 60 222 100z" fill="#fdab00"/>
        <ellipse cx="326" cy="68" rx="77" ry="30" fill="#ffae00"/>
        <g fill="none" stroke="#3a2c0c" stroke-width="3">
          <path d="M62 183 345 262 605 152M62 183 215 117M445 105 605 152"/>
          <path d="M42 225 325 295M368 310 622 185"/>
          <path d="M62 183Q40 190 42 225M605 152Q626 160 622 185M345 262Q370 280 368 310M345 262Q325 272 325 295Q340 312 368 310"/>
          <path d="M42 225 52 685 118 860M325 295 118 860M368 310 155 870M622 185 628 855"/>
          <path d="M155 870 655 822M118 860Q125 870 155 870L157 893"/>
          <path d="M205 150C215 180 270 190 330 190 390 190 440 180 452 150M205 150C215 120 220 110 218 100M452 150C445 130 440 115 440 100"/>
          <path d="M178 165C172 195 240 226 330 226 420 226 492 195 484 160"/>
          <path d="M218 100C222 60 270 36 326 36 385 36 435 60 440 100M220 100C240 125 290 128 330 128 375 128 420 122 440 100"/>
          <ellipse cx="326" cy="68" rx="77" ry="30"/>
          <path d="M268 90C262 110 252 125 250 150 250 175 248 190 238 210M405 90C410 110 415 125 418 150 420 175 430 190 445 205"/>
        </g>
      </svg>
      <svg class="triad" viewBox="0 0 120 130">
        <g fill="none" stroke="#a8a8a8" stroke-width="1.300"><path d="M38 43l14-4 13 5v17l-13 6-14-7z" fill="#d2d3d4" fill-opacity=".8"/><path d="M38 43l14 5 13-4M52 48v19"/></g>
        <path d="M50 58V34h1.500v24z" fill="#8aa8e0"/><path d="M50 28h2l3 8h-2v6h-4v-6h-2z" fill="#1a3fc0"/>
        <path d="M40 58l-15 6" stroke="#d8a0a0" stroke-width="1.500"/><path d="M30 62l-6 2-3 1 2-4z" fill="#c8282c" stroke="#c8282c" stroke-width="2"/>
        <path d="M52 56l14 2" stroke="#a8c8a8" stroke-width="1.500"/><path d="M66 58l9 2 0 3-9-1z" fill="#2c8a3a"/>
        <text x="49" y="26" class="ax ax-z">Z</text><text x="27" y="73" class="ax ax-x">X</text><text x="79" y="68" class="ax ax-y">Y</text>
      </svg>
    </div>
  </section>
</main>

<footer class="status"><span class="s1">选择对象并使用 MB3，或者双击某一对象</span><span class="s2">该操作重置恢复数据</span></footer>
</body>
</html>
```

FILE: styles.css
```css
* { box-sizing: border-box; }
html, body { margin: 0; padding: 0; }
body {
  width: 917px; height: 760px; overflow: hidden; background: #fff; color: #222;
  display: flex; flex-direction: column; position: relative;
  font: 11px/16px "Noto Sans CJK SC", "Liberation Sans", sans-serif;
}
.defs { position: absolute; }
ul { list-style: none; margin: 0; padding: 0; }
i, b { display: block; font-style: normal; }
svg { display: block; flex: none; overflow: visible; }

.arr { width: 0; height: 0; border-left: 3px solid transparent; border-right: 3px solid transparent; border-top: 3px solid #222; flex: none; }
.arr.up { border-top: 0; border-bottom: 3px solid #bbb; }
.over { width: 7px; height: 5px; border-top: 1px solid #222; position: relative; flex: none; }
.over::after { content: ""; position: absolute; left: .5px; top: 2px; border-left: 3px solid transparent; border-right: 3px solid transparent; border-top: 3px solid #222; }

/* Title bar */
.topshadow { position: absolute; left: 497px; top: 0; width: 268px; height: 2px; background: linear-gradient(#999, #fff); }
.titlebar { height: 26px; flex: none; display: flex; align-items: center; gap: 6px; padding-left: 4px; }
.logo { font: bold 21px/26px "Liberation Sans", sans-serif; color: #7d8b9c; width: 31px; letter-spacing: -.5px; }
.vsep { width: 1px; height: 20px; background: #d4d4d4; flex: none; }
.ti { width: 16px; height: 16px; }
.save-i { margin-left: 3px; }
.undo-i { margin-left: -2px; }
.arr-u { margin-left: 3px; }
.copy-i { margin-left: 2px; }
.paste-i { margin-left: 1px; }
.arr-d { margin: 0 6px 0 1px; }
.switch-i { margin-left: -1px; }
.tt { font-size: 11px; white-space: nowrap; }
.tt2 { margin-left: -2px; }
.arr-w { margin-left: -2px; }
.over-w { margin-left: -2px; }
.apptitle { margin-left: auto; margin-right: 88px; font-size: 13px; letter-spacing: .3px; white-space: nowrap; }

/* Tabs */
.tabs { height: 28px; flex: none; display: flex; background: #dcdcdc; font-size: 13px; line-height: 28px; }
.tab { padding: 0 13px; white-space: nowrap; color: #222; }
.tab.file { width: 82px; padding: 0 1px 0 0; text-align: center; background: #4f9fb9; color: #fff; }
.tab.active { background: #fff; color: #1c7f9e; }
.ug1 { letter-spacing: .2px; }
.ug2 { letter-spacing: 1px; }

/* Ribbon */
.ribbon { height: 93px; flex: none; display: flex; border-bottom: 1px solid #d8d8d8; overflow: hidden; }
.group { display: flex; flex-direction: column; flex: none; border-right: 1px solid transparent; position: relative; }
.group::after { content: ""; position: absolute; right: -1px; top: 4px; bottom: 4px; width: 1px; background: #d8d8d8; }
.g1 { width: 453px; padding-left: 8px; }
.g2 { width: 401px; padding-left: 9px; }
.g3 { flex: 1; }
.g3::after { display: none; }
.gbody { display: flex; height: 73px; flex: none; }
.gfoot { height: 19px; line-height: 22px; text-align: center; color: #1c7f9e; position: relative; }
.corner { position: absolute; right: 9px; top: 9px; }
.big { display: flex; flex-direction: column; align-items: center; margin-top: 5px; white-space: nowrap; flex: none; }
.w72 { width: 72px; }
.w52 { width: 52px; }
.w54 { width: 54px; }
.bi { width: 32px; height: 32px; margin-bottom: 4px; }
.big .arr { margin-top: 4px; }
.si { width: 16px; height: 16px; }
.list { margin-top: 1px; flex: none; }
.list li { height: 22px; display: flex; align-items: center; gap: 4px; white-space: nowrap; }
.l1 { width: 87px; margin-left: 6px; }
.l2 { width: 75px; margin-left: 12px; }
.l3 { width: 82px; }
.l3 li { gap: 3px; }
.l4 { width: 54px; }
.l4 li { gap: 5px; }
.gallery { width: 82px; height: 66px; margin-top: 5px; border: 1px solid #d8d8d8; padding-left: 4px; flex: none; }
.gallery li { height: 22px; display: flex; align-items: center; gap: 4px; white-space: nowrap; }
.gallery li:first-child { margin-top: -2px; }
.gscroll { width: 16px; display: flex; flex-direction: column; align-items: center; margin-top: 14px; gap: 18px; flex: none; }
.more { width: 38px; display: flex; flex-direction: column; align-items: center; margin-top: 4px; flex: none; }
.morebox { width: 38px; height: 35px; border: 1px solid #dedede; border-radius: 3px; display: flex; align-items: center; justify-content: center; margin-bottom: 2px; }
.more .arr { margin-top: 4px; }
.trim { width: 83px; margin-left: 4px; flex: none; display: flex; flex-direction: column; }
.trimrow { height: 34px; display: flex; align-items: center; gap: 6px; white-space: nowrap; margin-top: 3px; }
.trimrow + .trimrow { margin-top: 0; }
.ti22 { width: 22px; height: 28px; }
.ti22.short { height: 16px; }

/* Toolbar */
.toolbar { height: 25px; flex: none; display: flex; align-items: center; padding-left: 10px; }
.menu-t { margin: 0 6px 0 4px; font-size: 11.500px; white-space: nowrap; }
.tb-sep { margin: 0 0 0 6px; height: 18px; }
.tb { width: 25px; height: 22px; display: flex; align-items: center; justify-content: center; flex: none; }
.tb-sep + .tb { margin-left: 8px; }
.ta { display: flex; justify-content: center; align-items: center; flex: none; }
.a8 { width: 8px; } .a10 { width: 10px; } .a11 { width: 11px; } .a12 { width: 12px; } .a13 { width: 13px; } .a14 { width: 14px; }
.tb.on { background: #c6dde8; border: 1px solid #b6cfdc; width: 23px; margin: 0 1px; }

/* Main */
.main { flex: 1; min-height: 0; display: flex; border-top: 1px solid #9a9a9a; }
.rail { width: 32px; flex: none; background: #dadada; border-right: 1px solid #999; display: flex; flex-direction: column; align-items: center; position: relative; }
.ri { width: 26px; height: 26px; flex: none; }
.gear-i { width: 16px; }
.ri:nth-child(2) { margin-top: 23px; }
.ri:nth-child(3) { margin-top: 17px; }
.ri:nth-child(4) { margin-top: 15px; }
.railsel { width: 32px; height: 46px; margin: 8px 0 5px 2px; background: #fff; border: 1px solid #aaa; border-right: 0; border-radius: 3px 0 0 3px; display: flex; align-items: center; justify-content: center; align-self: flex-start; flex: none; }
.ri:nth-child(7) { margin-top: 16px; }
.ri:nth-child(8) { margin-top: 30px; }
.ri:nth-child(9) { margin-top: 27px; }
.ri:nth-child(10) { margin-top: 27px; }
.ri:nth-child(11) { margin-top: 20px; }
.railend { margin-top: auto; margin-bottom: 8px; display: flex; flex-direction: column; align-items: center; gap: 12px; }
.wave { width: 26px; height: 3px; border-top: 1px solid #666; border-radius: 50%; }

.panel { width: 277px; flex: none; padding: 0 9px 0 6px; border-right: 1px solid #999; display: flex; flex-direction: column; background: #fff; }
.ptitle { height: 30px; display: flex; align-items: center; justify-content: space-between; font-size: 11.500px; padding: 0 6px 0 4px; flex: none; }
.maxbox { width: 12px; height: 10px; border: 1px solid #111; border-top-width: 2px; }
.table { width: 261px; border: 1px solid #d4d4d4; border-bottom: 0; height: 452px; display: flex; flex-direction: column; flex: none; overflow: hidden; padding: 0 1px; }
.thead { height: 20px; flex: none; display: flex; background: #f0f0f0; border-bottom: 1px solid #d8d8d8; line-height: 20px; font-size: 12px; }
.thead .c1 { display: flex; align-items: center; padding-left: 6px; }
.c1 { width: 199px; flex: none; height: 100%; }
.c2 { flex: 1; border-left: 1px solid #e4e4e4; height: 100%; padding-left: 6px; }
.sort { border-top: 0; border-bottom: 4px solid #111; border-left-width: 5px; border-right-width: 5px; margin-left: 16px; }
.tbody { flex: 1; overflow: hidden; min-height: 0; }
.row { height: 20px; display: flex; border-bottom: 1px solid #ececec; font-size: 12px; line-height: 19px; }
.row:nth-child(even) { background: #f9f9f9; }
.row .c1 { display: flex; align-items: center; padding-left: 6px; position: relative; overflow: hidden; }
.row .c2 { display: flex; align-items: center; padding-left: 5px; }
.nm { white-space: nowrap; margin-left: 2px; }
.nm3 { margin-left: 3px; }
.dim { color: #a2a2a2; }
.strong { font-weight: 700; }
.exp { width: 9px; height: 9px; border: 1px solid #aaa; background: #fff; position: relative; flex: none; }
.exp::before { content: ""; position: absolute; left: 1px; top: 3px; width: 5px; height: 1px; background: #222; }
.plus::after { content: ""; position: absolute; left: 3px; top: 1px; width: 1px; height: 5px; background: #222; }
.dash { width: 3px; border-top: 1px dotted #888; margin-right: 2px; flex: none; }
.ck-s { width: 13px; height: 13px; margin-right: 2px; }
.ck-l { width: 14px; height: 14px; }
.sub { padding-left: 28px !important; }
.tee { width: 11px; height: 20px; position: relative; flex: none; }
.tee::before { content: ""; position: absolute; left: 0; top: -1px; bottom: 0; border-left: 1px dotted #888; }
.tee.last::before { bottom: 10px; }
.tee::after { content: ""; position: absolute; left: 0; right: 0; top: 10px; border-top: 1px dotted #888; }
.chk { width: 13px; height: 13px; border: 1.500px solid #222; background: #fff; position: relative; flex: none; margin-right: 2px; }
.chk::after { content: ""; position: absolute; left: 3px; top: 0; width: 4px; height: 8px; border: solid #1d9a3c; border-width: 0 2px 2px 0; transform: rotate(40deg); }
.hscroll { height: 20px; flex: none; background: #f0f0f0; display: flex; align-items: center; padding: 0 4px 4px; justify-content: space-between; }
.tri-l { width: 0; height: 0; border-top: 4px solid transparent; border-bottom: 4px solid transparent; border-right: 4px solid #333; flex: none; }
.tri-r { width: 0; height: 0; border-top: 4px solid transparent; border-bottom: 4px solid transparent; border-left: 4px solid #333; flex: none; }
.thumb { width: 140px; height: 15px; margin-left: 9px; margin-right: auto; background: linear-gradient(#ececec, #c4c4c4); border: 1px solid #999; border-radius: 2px; display: flex; align-items: center; justify-content: center; }
.thumb i { width: 7px; height: 6px; background: repeating-linear-gradient(90deg, #555 0 1px, transparent 1px 3px); }
.sash { width: 261px; height: 4px; background: #cfcfcf; border: 1px solid #999; border-bottom: 0; flex: none; margin-bottom: 1px; }
.acc { width: 261px; height: 24px; flex: none; border-bottom: 2px solid #cacaca; display: flex; justify-content: space-between; align-items: center; padding: 1px 6px 0 7px; color: #1e6d88; font-size: 14px; line-height: 22px; }
.chev { width: 11px; height: 9px; fill: none; stroke: #1e6d88; stroke-width: 1.800; margin-bottom: 3px; }

.strip { width: 34px; flex: none; background: #fff; display: flex; flex-direction: column; align-items: center; padding: 10px 0 6px; gap: 8.670px; }
.sti { width: 24px; height: 24px; }
.stripsep { width: 26px; height: 1px; background: #d8d8d8; }
.strip-arrow { margin-top: auto; margin-right: 18px; }

.view { flex: 1; display: flex; flex-direction: column; min-width: 0; background: #fff; }
.viewtabs { height: 23px; flex: none; }
.vtab { width: 143px; height: 23px; background: #4f9fb9; color: #fff; display: flex; align-items: center; padding-left: 7px; font-size: 13.500px; white-space: nowrap; }
.vtab span:first-of-type { margin-left: 3px; font-family: "Liberation Sans", sans-serif; }
.doc { width: 12px; height: 14px; margin-left: 6px; }
.x { font: bold 12px "DejaVu Sans", sans-serif; margin-left: 5px; }
.canvas { flex: 1; position: relative; background: linear-gradient(#b4b5b6, #e9eaeb); overflow: hidden; }
.bottle { position: absolute; left: 57px; top: 73px; width: 230px; height: 310px; }
.triad { position: absolute; left: -3px; top: 433px; width: 120px; height: 130px; }
.ax { font: 13px "Liberation Sans", sans-serif; }
.ax-z { fill: #1a3fc0; text-anchor: middle; }
.ax-x { fill: #c8282c; text-anchor: middle; }
.ax-y { fill: #2c8a3a; text-anchor: middle; }
.svg-i { font: bold 15px "Liberation Serif", serif; fill: #fff; text-anchor: middle; }

.status { height: 22px; flex: none; border-top: 1px solid #a8a8a8; display: flex; align-items: center; padding: 0 0 3px 3px; font-size: 11px; font-weight: 700; color: #333; }
.s1 { width: 584px; }
```
